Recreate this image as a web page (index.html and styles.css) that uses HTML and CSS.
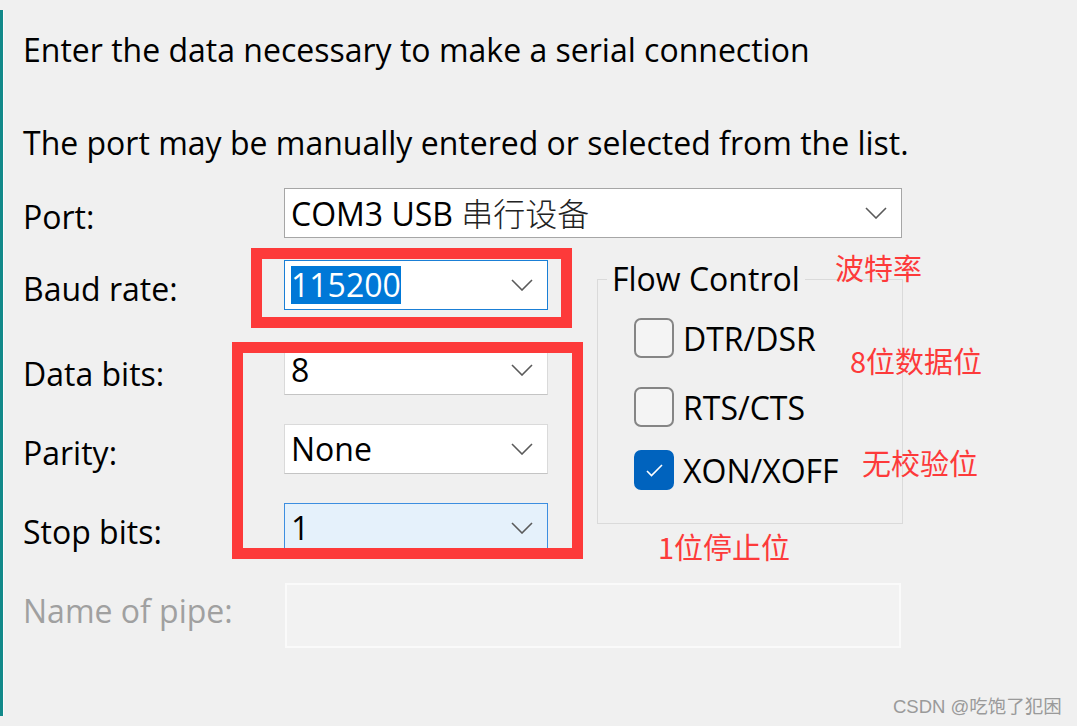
FILE: index.html
```html
<!DOCTYPE html>
<html>
<head>
<meta charset="utf-8">
<link rel="stylesheet" href="styles.css">
</head>
<body>
<div class="page">
  <div class="frame">
    <div class="content">
      <div class="intro">Enter the data necessary to make a serial connection</div>
      <div class="intro intro2">The port may be manually entered or selected from the list.</div>
      <div class="form">
        <div class="label row1">Port:</div>
        <div class="combo wide hover row1">
          <span class="val">COM3 USB <span class="cjk">串行设备</span></span>
          <svg class="chev" width="22" height="12" viewBox="0 0 22 12"><path d="M1 1 L11 11 L21 1" fill="none" stroke="#5a5a5a" stroke-width="1.6"/></svg>
        </div>

        <div class="label row2">Baud rate:</div>
        <div class="combo focus row2">
          <span class="val"><span class="sel">115200</span></span>
          <svg class="chev" width="22" height="12" viewBox="0 0 22 12"><path d="M1 1 L11 11 L21 1" fill="none" stroke="#5a5a5a" stroke-width="1.6"/></svg>
        </div>

        <div class="group">
          <span class="legend">Flow Control</span>
          <div class="check c1"><span class="box"></span><span class="clabel">DTR/DSR</span></div>
          <div class="check c2"><span class="box"></span><span class="clabel">RTS/CTS</span></div>
          <div class="check c3"><span class="box on"><svg width="38" height="38" viewBox="0 0 38 38"><path d="M12 20 L16.5 24.5 L27 14" fill="none" stroke="#fff" stroke-width="1.6"/></svg></span><span class="clabel">XON/XOFF</span></div>
        </div>

        <div class="label row3">Data bits:</div>
        <div class="combo row3">
          <span class="val">8</span>
          <svg class="chev" width="22" height="12" viewBox="0 0 22 12"><path d="M1 1 L11 11 L21 1" fill="none" stroke="#5a5a5a" stroke-width="1.6"/></svg>
        </div>

        <div class="label row4">Parity:</div>
        <div class="combo row4">
          <span class="val">None</span>
          <svg class="chev" width="22" height="12" viewBox="0 0 22 12"><path d="M1 1 L11 11 L21 1" fill="none" stroke="#5a5a5a" stroke-width="1.6"/></svg>
        </div>

        <div class="label row5">Stop bits:</div>
        <div class="combo active row5">
          <span class="val">1</span>
          <svg class="chev" width="22" height="12" viewBox="0 0 22 12"><path d="M1 1 L11 11 L21 1" fill="none" stroke="#5a5a5a" stroke-width="1.6"/></svg>
        </div>

        <div class="label disabled row6">Name of pipe:</div>
        <div class="textbox row6"></div>
      </div>
    </div>
  </div>

  <div class="redbox rb1"></div>
  <div class="redbox rb2"></div>
  <div class="note n1">波特率</div>
  <div class="note n2">8位数据位</div>
  <div class="note n3">无校验位</div>
  <div class="note n4">1位停止位</div>
  <div class="watermark">CSDN @吃饱了犯困</div>
</div>
</body>
</html>
```

FILE: styles.css
```css
html, body {
  margin: 0;
  padding: 0;
  background: #f0f0f0;
}
body {
  font-family: "Open Sans", "Noto Sans CJK SC", sans-serif;
  color: #000;
  font-size: 32px;
}
.page {
  position: relative;
  width: 1077px;
  height: 726px;
  overflow: hidden;
}
.frame {
  margin-top: 10px;
  height: 706px;
  border-left: 3px solid #12898a;
}
.content {
  height: 100%;
  border-left: 1px solid #fbfbfb;
  padding-left: 19px;
  box-sizing: border-box;
  padding-top: 20px;
}
.intro {
  line-height: 40px;
  height: 40px;
  white-space: nowrap;
}
.intro2 {
  margin-top: 53px;
}
.form {
  margin-top: 25px;
  display: grid;
  grid-template-columns: 261px 264px 49px 306px;
  grid-template-rows: 72px 85px 79px 79px 80px 65px;
}
.row1 { grid-row: 1; }
.row2 { grid-row: 2; }
.row3 { grid-row: 3; }
.row4 { grid-row: 4; }
.row5 { grid-row: 5; }
.row6 { grid-row: 6; }
.label {
  grid-column: 1;
  height: 50px;
  line-height: 50px;
  padding-top: 4px;
  box-sizing: border-box;
  white-space: nowrap;
}
.label.disabled {
  color: #a0a0a0;
  height: 56px;
  line-height: 56px;
  padding-top: 0;
}
.combo {
  grid-column: 2;
  align-self: start;
  height: 50px;
  box-sizing: border-box;
  background: #fff;
  border: 1px solid #dadada;
  border-bottom-color: #c4c4c4;
  display: flex;
  align-items: center;
  justify-content: space-between;
  padding-left: 6px;
}
.combo.wide {
  grid-column: 2 / 5;
  width: 618px;
}
.combo.hover {
  border: 1px solid #a6a6a6;
}
.combo.focus {
  border: 1px solid #1a7fd6;
}
.combo.active {
  background: #e5f1fb;
  border: 1px solid #3d8ee0;
}
.val {
  line-height: 38px;
  white-space: nowrap;
}
.cjk {
  font-family: "Noto Sans CJK SC", sans-serif;
  font-weight: 300;
  font-size: 32px;
  color: #222;
}
.sel {
  display: inline-block;
  background: #0078d7;
  color: #fff;
  line-height: 38px;
}
.chev {
  margin-right: 14px;
  flex: none;
}
.group {
  grid-column: 4;
  grid-row: 2 / 6;
  align-self: start;
  margin-top: 19px;
  height: 245px;
  box-sizing: border-box;
  border: 1px solid #dadada;
}
.legend {
  display: block;
  width: max-content;
  margin: -21px 0 0 9px;
  padding: 0 5px;
  background: #f0f0f0;
  line-height: 40px;
  height: 40px;
}
.check {
  display: flex;
  align-items: center;
  margin-left: 36px;
  height: 40px;
}
.c1 { margin-top: 19px; }
.c2 { margin-top: 29px; }
.c3 { margin-top: 23px; }
.box {
  width: 40px;
  height: 40px;
  box-sizing: border-box;
  border: 2px solid #858585;
  border-radius: 7px;
  background: #f4f4f4;
  flex: none;
}
.box.on {
  background: #0063be;
  border-color: #0063be;
}
.box.on svg {
  display: block;
  margin: -1px;
}
.clabel {
  margin-left: 9px;
  white-space: nowrap;
}
.textbox {
  grid-column: 2 / 5;
  width: 616px;
  height: 65px;
  margin-left: 1px;
  box-sizing: border-box;
  border: 2px solid #fafafa;
  background: #f2f2f2;
}
.redbox {
  position: absolute;
  border: 11px solid #fd3a3a;
  box-sizing: border-box;
}
.rb1 { left: 251px; top: 248px; width: 321px; height: 80px; }
.rb2 { left: 232px; top: 342px; width: 351px; height: 217px; }
.note {
  position: absolute;
  font-family: "Noto Sans CJK SC", sans-serif;
  font-size: 29px;
  line-height: 36px;
  color: #fd3a3a;
  white-space: nowrap;
}
.n1 { left: 835px; top: 249px; }
.n2 { left: 850px; top: 342px; }
.n3 { left: 862px; top: 444px; }
.n4 { left: 658px; top: 528px; }
.watermark {
  position: absolute;
  left: 893px;
  top: 697px;
  font-family: "Liberation Sans", "Noto Sans CJK SC", sans-serif;
  font-size: 18.5px;
  line-height: 20px;
  color: #9a9a9a;
  white-space: nowrap;
}
```
